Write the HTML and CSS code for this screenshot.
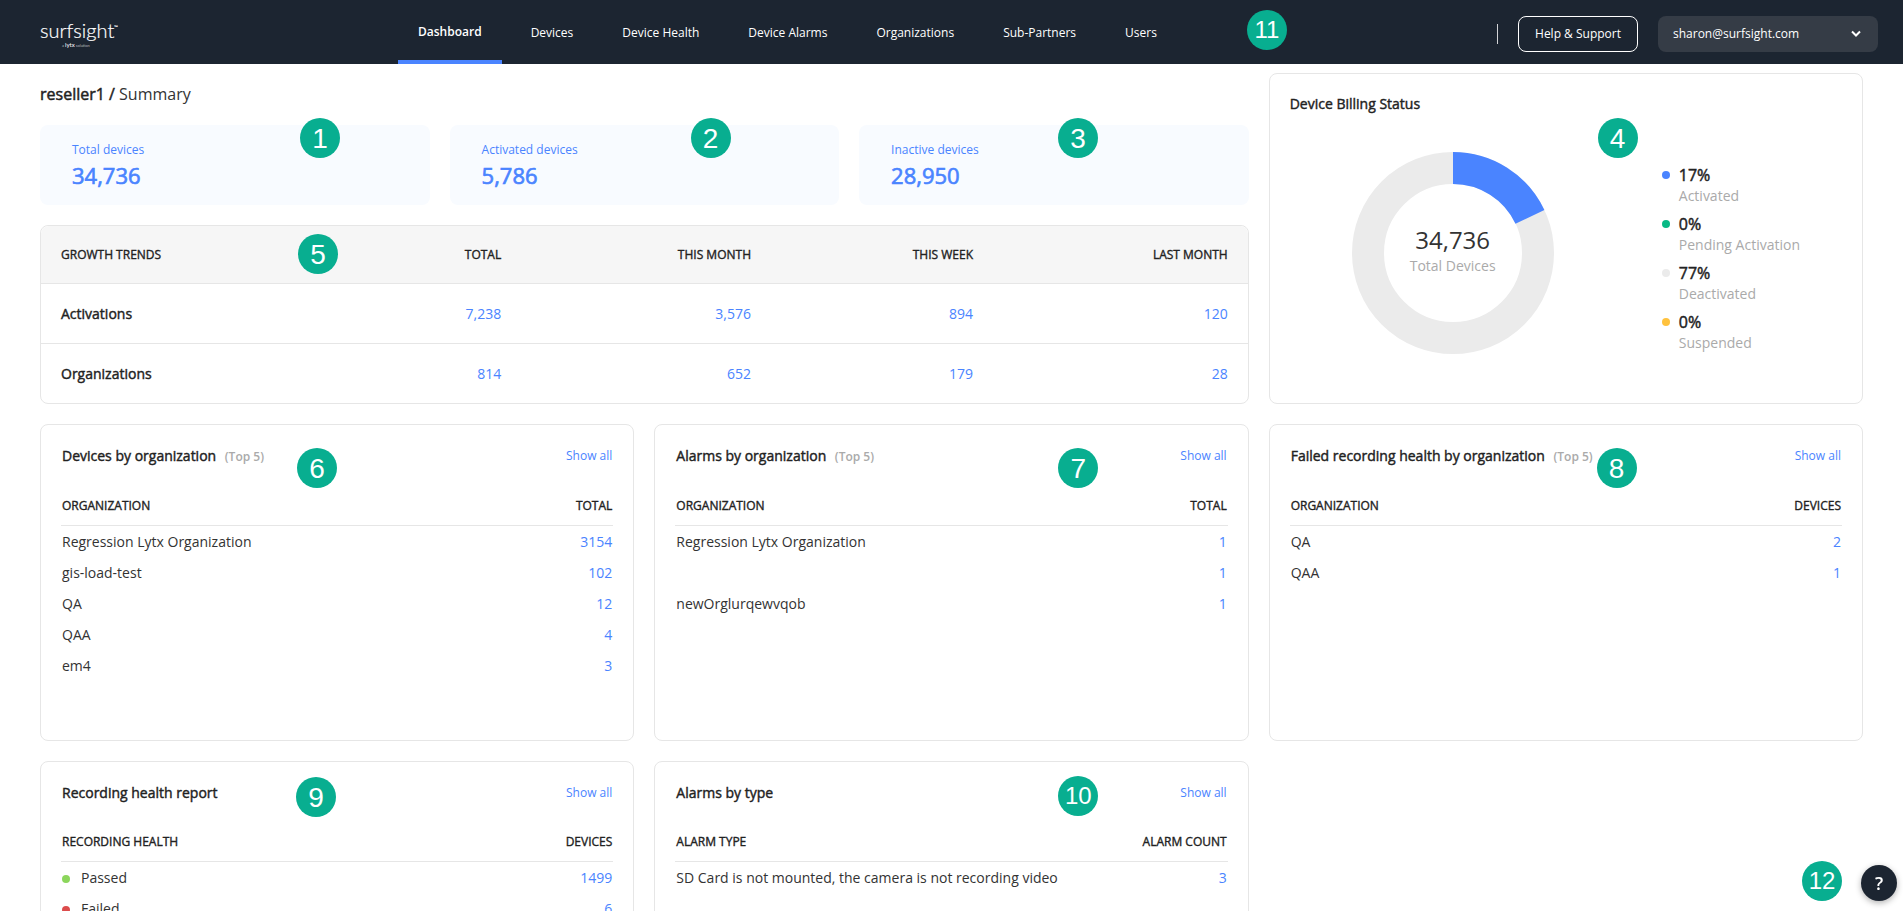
FILE: index.html
```html
<!DOCTYPE html>
<html lang="en">
<head>
  <meta charset="UTF-8">
  <meta name="viewport" content="width=device-width, initial-scale=1.0">
  <title>Surfsight - Dashboard</title>
  <link rel="stylesheet" href="styles.css">
</head>
<body>
  <header class="topbar">
    <a class="logo" href="#">
      <span class="logo-name">surfsight<span class="logo-tm">™</span></span>
      <span class="logo-sub">a <b>lytx</b> solution</span>
    </a>

    <nav class="nav">
      <a class="nav-link active" href="#">Dashboard</a>
      <a class="nav-link" href="#">Devices</a>
      <a class="nav-link" href="#">Device Health</a>
      <a class="nav-link" href="#">Device Alarms</a>
      <a class="nav-link" href="#">Organizations</a>
      <a class="nav-link" href="#">Sub-Partners</a>
      <a class="nav-link" href="#">Users</a>
    </nav>

    <div class="topbar-right">
      <span class="divider"></span>
      <button class="btn-help" type="button">Help &amp; Support</button>
      <button class="btn-account" type="button" aria-haspopup="true">
        <span>sharon@surfsight.com</span>
        <svg width="10" height="8" viewBox="0 0 10 8" fill="none" stroke="#fff" stroke-width="2"><path d="M1 1.5l4 4 4-4"/></svg>
      </button>
    </div>
    <span class="marker marker-small marker-nav">11</span>
  </header>

  <main class="dashboard">
    <div class="overview">
      <h1 class="breadcrumb"><a href="#">reseller1 /</a> Summary</h1>

      <div class="stats">
        <div class="stat">
          <span class="stat-label">Total devices</span>
          <span class="stat-value">34,736</span>
          <span class="marker marker-stat-total">1</span>
        </div>
        <div class="stat">
          <span class="stat-label">Activated devices</span>
          <span class="stat-value">5,786</span>
          <span class="marker marker-stat-active">2</span>
        </div>
        <div class="stat">
          <span class="stat-label">Inactive devices</span>
          <span class="stat-value">28,950</span>
          <span class="marker marker-stat-inactive">3</span>
        </div>
      </div>

      <div class="card trends">
        <table class="trends-table">
          <thead>
            <tr>
              <th class="col-name">Growth trends</th>
              <th class="col-total">Total</th>
              <th class="col-month">This month</th>
              <th class="col-week">This week</th>
              <th>Last month</th>
            </tr>
          </thead>
          <tbody>
            <tr>
              <th scope="row">Activations</th>
              <td>7,238</td>
              <td>3,576</td>
              <td>894</td>
              <td>120</td>
            </tr>
            <tr>
              <th scope="row">Organizations</th>
              <td>814</td>
              <td>652</td>
              <td>179</td>
              <td>28</td>
            </tr>
          </tbody>
        </table>
        <span class="marker marker-trends">5</span>
      </div>
    </div>

    <section class="card billing">
      <h2>Device Billing Status</h2>
      <div class="billing-body">
        <div class="donut">
          <svg width="202" height="202" viewBox="-101 -101 202 202">
            <circle r="85" fill="none" stroke="#ebebeb" stroke-width="32"/>
            <circle r="85" fill="none" stroke="#4a84ff" stroke-width="32" pathLength="100" stroke-dasharray="18 82" transform="rotate(-90)"/>
          </svg>
          <div class="donut-label">
            <span class="donut-value">34,736</span>
            <span class="donut-text">Total Devices</span>
          </div>
        </div>
        <ul class="legend">
          <li><i class="dot dot-blue"></i><b>17%</b><span>Activated</span></li>
          <li><i class="dot dot-green"></i><b>0%</b><span>Pending Activation</span></li>
          <li><i class="dot dot-gray"></i><b>77%</b><span>Deactivated</span></li>
          <li><i class="dot dot-yellow"></i><b>0%</b><span>Suspended</span></li>
        </ul>
      </div>
      <span class="marker marker-billing">4</span>
    </section>

    <section class="card report">
      <div class="report-head">
        <h2>Devices by organization <small>(Top 5)</small></h2>
        <a href="#">Show all</a>
      </div>
      <table class="report-table">
        <thead>
          <tr><th>Organization</th><th>Total</th></tr>
        </thead>
        <tbody>
          <tr><td>Regression Lytx Organization</td><td>3154</td></tr>
          <tr><td>gis-load-test</td><td>102</td></tr>
          <tr><td>QA</td><td>12</td></tr>
          <tr><td>QAA</td><td>4</td></tr>
          <tr><td>em4</td><td>3</td></tr>
        </tbody>
      </table>
      <span class="marker marker-devices">6</span>
    </section>

    <section class="card report">
      <div class="report-head">
        <h2>Alarms by organization <small>(Top 5)</small></h2>
        <a href="#">Show all</a>
      </div>
      <table class="report-table">
        <thead>
          <tr><th>Organization</th><th>Total</th></tr>
        </thead>
        <tbody>
          <tr><td>Regression Lytx Organization</td><td>1</td></tr>
          <tr><td></td><td>1</td></tr>
          <tr><td>newOrglurqewvqob</td><td>1</td></tr>
        </tbody>
      </table>
      <span class="marker marker-alarms">7</span>
    </section>

    <section class="card report">
      <div class="report-head">
        <h2>Failed recording health by organization <small>(Top 5)</small></h2>
        <a href="#">Show all</a>
      </div>
      <table class="report-table">
        <thead>
          <tr><th>Organization</th><th>Devices</th></tr>
        </thead>
        <tbody>
          <tr><td>QA</td><td>2</td></tr>
          <tr><td>QAA</td><td>1</td></tr>
        </tbody>
      </table>
      <span class="marker marker-failed">8</span>
    </section>

    <section class="card report">
      <div class="report-head">
        <h2>Recording health report</h2>
        <a href="#">Show all</a>
      </div>
      <table class="report-table">
        <thead>
          <tr><th>Recording health</th><th>Devices</th></tr>
        </thead>
        <tbody>
          <tr><td><i class="dot dot-passed"></i>Passed</td><td>1499</td></tr>
          <tr><td><i class="dot dot-failed"></i>Failed</td><td>6</td></tr>
        </tbody>
      </table>
      <span class="marker marker-recording">9</span>
    </section>

    <section class="card report">
      <div class="report-head">
        <h2>Alarms by type</h2>
        <a href="#">Show all</a>
      </div>
      <table class="report-table">
        <thead>
          <tr><th>Alarm type</th><th>Alarm count</th></tr>
        </thead>
        <tbody>
          <tr><td>SD Card is not mounted, the camera is not recording video</td><td>3</td></tr>
        </tbody>
      </table>
      <span class="marker marker-small marker-types">10</span>
    </section>
  </main>

  <span class="marker marker-small marker-chat">12</span>
  <button class="chat-btn" type="button" aria-label="Help">?</button>
</body>
</html>
```

FILE: styles.css
```css
:root {
  --navy: #1c2531;
  --blue: #4a84ff;
  --text: #333;
  --heading: #222;
  --muted: #aaa;
  --border: #e6e6e6;
  --marker: #08ae90;
}

* {
  box-sizing: border-box;
}

body {
  margin: 0;
  font-family: "Open Sans", "Noto Sans", sans-serif;
  font-size: 14px;
  line-height: 20px;
  color: var(--text);
  background: #fff;
}

a {
  color: inherit;
  text-decoration: none;
}

button {
  font: inherit;
  font-size: 12px;
  color: #fff;
  cursor: pointer;
}

/* Emphasis keeps the regular width and only thickens the strokes */
.breadcrumb a,
.stat-value,
.card h2,
.card th,
.legend b {
  font-weight: 400;
  -webkit-text-stroke: 0.03em currentColor;
}

/* Top bar */
.topbar {
  position: relative;
  display: flex;
  height: 64px;
  padding: 0 25px 0 40px;
  background: var(--navy);
  color: #fff;
}

.logo {
  display: flex;
  flex-direction: column;
  width: 358px;
  padding-top: 16px;
  font-family: Lato, sans-serif;
}

.logo-name {
  font-size: 20px;
  font-weight: 300;
  line-height: 22px;
  -webkit-text-stroke: 0.01em currentColor;
}

.logo-tm {
  font-size: 5px;
  vertical-align: 9px;
}

.logo-sub {
  padding-left: 22px;
  font-size: 4px;
  line-height: 7px;
  color: #b5b8bc;
}

.logo-sub b {
  font-size: 6px;
  font-weight: 400;
  color: #fff;
}

.nav {
  display: flex;
  gap: 9px;
}

.nav-link {
  padding: 0 20px;
  font-size: 12px;
  line-height: 66px;
}

.nav-link.active {
  font-weight: 600;
  line-height: 64px;
  border-bottom: 4px solid var(--blue);
}

.topbar-right {
  display: flex;
  align-items: center;
  gap: 20px;
  margin-left: auto;
  padding-top: 4px;
}

.divider {
  width: 1px;
  height: 20px;
  background: #d2d3d6;
}

.btn-help {
  height: 36px;
  padding: 0 16px;
  background: none;
  border: 1px solid #fff;
  border-radius: 8px;
}

.btn-account {
  display: flex;
  align-items: center;
  justify-content: space-between;
  width: 220px;
  height: 36px;
  padding: 0 17px 0 15px;
  background: #353c46;
  border: 0;
  border-radius: 8px;
}

/* Dashboard grid */
.dashboard {
  display: grid;
  grid-template-columns: repeat(3, 1fr);
  gap: 20px;
  padding: 9px 40px 40px;
}

.overview {
  grid-column: span 2;
}

.breadcrumb {
  margin: 0;
  padding: 9px 0 19px;
  font-size: 16px;
  font-weight: 400;
  line-height: 24px;
}

.breadcrumb a {
  color: var(--heading);
}

.stats {
  display: grid;
  grid-template-columns: repeat(3, 1fr);
  gap: 20px;
  margin-bottom: 20px;
}

.stat {
  position: relative;
  display: flex;
  flex-direction: column;
  padding: 14px 32px 16px;
  color: var(--blue);
  background: #f8fbff;
  border-radius: 8px;
}

.stat-label {
  font-size: 12px;
  line-height: 22px;
}

.stat-value {
  font-size: 22px;
  line-height: 28px;
}

.card {
  position: relative;
  border: 1px solid var(--border);
  border-radius: 8px;
}

.card h2 {
  margin: 0;
  font-size: 14px;
  color: var(--heading);
}

.card th {
  color: var(--heading);
}

/* Growth trends */
.trends-table {
  width: 100%;
  border-spacing: 0;
  table-layout: fixed;
}

.trends-table th,
.trends-table td {
  height: 60px;
  padding: 0 20px;
  text-align: right;
  border-bottom: 1px solid var(--border);
}

.trends-table th:first-child {
  text-align: left;
}

.trends-table thead th {
  height: 58px;
  font-size: 12px;
  text-transform: uppercase;
  background: #f6f6f6;
}

.trends-table thead th:first-child {
  border-top-left-radius: 8px;
}

.trends-table thead th:last-child {
  border-top-right-radius: 8px;
}

.trends-table td {
  color: var(--blue);
}

.trends-table tbody tr:last-child > * {
  height: 59px;
  border-bottom: 0;
}

.col-name {
  width: 23%;
}

.col-total {
  width: 16.8%;
}

.col-month {
  width: 20.7%;
}

.col-week {
  width: 18.4%;
}

/* Billing status */
.billing {
  padding: 20px;
}

.billing-body {
  display: flex;
  align-items: center;
  justify-content: space-between;
  padding: 38px 42px 0 62px;
}

.donut {
  display: grid;
  place-items: center;
}

.donut svg,
.donut-label {
  grid-area: 1 / 1;
}

.donut-label {
  display: flex;
  flex-direction: column;
  align-items: center;
  padding-bottom: 6px;
}

.donut-value {
  font-size: 24px;
  line-height: 32px;
}

.donut-text {
  color: var(--muted);
}

.legend {
  display: flex;
  flex-direction: column;
  gap: 8px;
  margin: 0;
  padding: 12px 0 0;
  list-style: none;
}

.legend li {
  display: grid;
  grid-template-columns: 8px 1fr;
  gap: 1px 9px;
  align-items: center;
}

.legend b {
  font-size: 16px;
  color: var(--heading);
}

.legend span {
  grid-column: 2;
  color: var(--muted);
}

.dot {
  display: inline-block;
  width: 8px;
  height: 8px;
  border-radius: 50%;
}

.dot-blue {
  background: var(--blue);
}

.dot-green {
  background: #08b985;
}

.dot-gray {
  background: #ebebeb;
}

.dot-yellow {
  background: #ffc23e;
}

.dot-passed {
  background: #8cd65c;
}

.dot-failed {
  background: #dc4c4c;
}

/* Report cards */
.report {
  min-height: 317px;
  padding: 20px;
}

.report-head {
  display: flex;
  justify-content: space-between;
  padding: 1px 1px 20px;
}

.report-head a {
  font-size: 12px;
  color: var(--blue);
}

.report-head small {
  margin-left: 5px;
  font-size: 12px;
  font-weight: 600;
  color: var(--muted);
  -webkit-text-stroke: 0;
}

.report-table {
  width: 100%;
  border-spacing: 0;
}

.report-table th,
.report-table td {
  height: 31px;
  padding: 0 1px;
  text-align: left;
}

.report-table th {
  height: 39px;
  font-size: 12px;
  text-transform: uppercase;
  border-bottom: 1px solid var(--border);
}

.report-table th:last-child,
.report-table td:last-child {
  text-align: right;
}

.report-table td:last-child {
  color: var(--blue);
}

.report-table .dot {
  margin-right: 11px;
}

/* Numbered markers laid over the page */
.marker {
  position: absolute;
  width: 40px;
  height: 40px;
  border-radius: 50%;
  font-family: "Liberation Sans", Arial, sans-serif;
  font-size: 28px;
  line-height: 42px;
  text-align: center;
  color: #fff;
  background: var(--marker);
}

.marker-small {
  font-size: 24px;
  line-height: 40px;
}

.marker-nav {
  top: 10px;
  left: 1247px;
}

.marker-stat-total {
  top: -7px;
  left: 260px;
}

.marker-stat-active {
  top: -7px;
  left: 241px;
}

.marker-stat-inactive {
  top: -7px;
  left: 199px;
}

.marker-billing {
  top: 44px;
  left: 328px;
}

.marker-trends {
  top: 8px;
  left: 257px;
}

.marker-devices {
  top: 23px;
  left: 256px;
}

.marker-alarms {
  top: 23px;
  left: 403px;
}

.marker-failed {
  top: 23px;
  left: 327px;
}

.marker-recording {
  top: 15px;
  left: 255px;
}

.marker-types {
  top: 14px;
  left: 403px;
}

.marker-chat {
  position: fixed;
  right: 61px;
  bottom: 10px;
}

.chat-btn {
  position: fixed;
  right: 6px;
  bottom: 10px;
  width: 36px;
  height: 36px;
  padding: 0;
  font-size: 18px;
  font-weight: 600;
  background: var(--navy);
  border: 0;
  border-radius: 50%;
  box-shadow: 0 2px 6px rgba(0, 0, 0, 0.3);
}
```
